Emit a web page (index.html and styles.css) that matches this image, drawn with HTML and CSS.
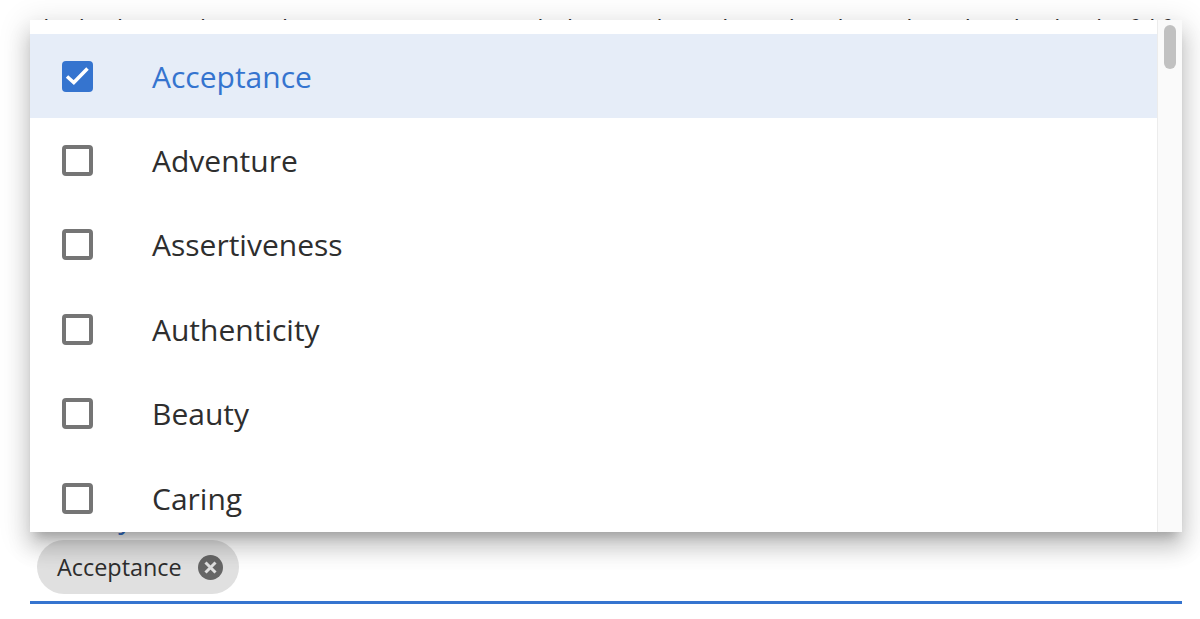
FILE: index.html
```html
<!DOCTYPE html>
<html>
<head>
    <title>Values</title>
    <meta charset="UTF-8">
    <meta name="viewport" content="width=device-width, initial-scale=1.0">
    <link rel="stylesheet" href="styles.css">
</head>
<body>
    <div class="page">
        <p class="hint">Think about what truly matters to you and choose the values that best describe the kind of life</p>
        <div class="field">
            <label class="field-label">Primary values</label>
            <div class="chips">
                <span class="chip">
                    Acceptance
                    <svg class="chip-remove" viewBox="0 0 25 25" width="25" height="25">
                        <circle cx="12.5" cy="12.5" r="12.5" fill="#666666"/>
                        <path d="M7.5 7.5 L17.5 17.5 M17.5 7.5 L7.5 17.5" stroke="#e0e0e0" stroke-width="3" fill="none"/>
                    </svg>
                </span>
            </div>
        </div>

        <div class="menu">
            <ul class="options">
                <li class="option selected">
                    <span class="checkbox">
                        <svg viewBox="0 0 31 31" width="31" height="31">
                            <path d="M5 15.5 L11.8 21.5 L25.5 7.5" stroke="#ffffff" stroke-width="3.5" fill="none"/>
                        </svg>
                    </span>
                    Acceptance
                </li>
                <li class="option"><span class="checkbox"></span>Adventure</li>
                <li class="option"><span class="checkbox"></span>Assertiveness</li>
                <li class="option"><span class="checkbox"></span>Authenticity</li>
                <li class="option"><span class="checkbox"></span>Beauty</li>
                <li class="option"><span class="checkbox"></span>Caring</li>
                <li class="option"><span class="checkbox"></span>Challenge</li>
            </ul>
            <div class="scrollbar">
                <div class="scrollbar-thumb"></div>
            </div>
        </div>
    </div>
</body>
</html>
```

FILE: styles.css
```css
html, body {
    margin: 0;
    height: 100%;
    background-color: #ffffff;
    overflow: hidden;
}
.page {
    position: relative;
    height: 619px;
    padding: 0 18px 0 30px;
    box-sizing: border-box;
    font-family: "Open Sans", sans-serif;
    color: #2e2e2e;
}
.hint {
    margin: 0;
    padding-top: 12px;
    font-size: 24px;
    line-height: 32px;
    word-spacing: 6px;
    white-space: nowrap;
    overflow: hidden;
}
.field {
    margin-top: 456px;
    border-bottom: 3px solid #3574cf;
}
.field-label {
    display: block;
    font-size: 28px;
    line-height: 34px;
    color: #3574cf;
}
.chips {
    display: flex;
    padding: 6px 7px 7px;
}
.chip {
    display: flex;
    align-items: center;
    gap: 16px;
    height: 54px;
    padding: 0 16px 0 20px;
    border-radius: 27px;
    background-color: #e0e0e0;
    font-size: 23.4px;
}
.menu {
    position: absolute;
    top: 20px;
    left: 30px;
    width: 1152px;
    height: 512px;
    display: flex;
    overflow: hidden;
    background-color: #ffffff;
    box-shadow: 0 10px 10px -6px rgba(0, 0, 0, 0.2), 0 16px 20px 2px rgba(0, 0, 0, 0.14), 0 6px 28px 4px rgba(0, 0, 0, 0.12);
}
.options {
    flex: 1;
    margin: 0;
    padding: 14px 0 0;
    list-style: none;
}
.option {
    display: flex;
    align-items: center;
    gap: 59px;
    height: 84.4px;
    padding-left: 32px;
    font-size: 30px;
}
.option.selected {
    background-color: #e6edf8;
    color: #3574cf;
}
.checkbox {
    width: 31px;
    height: 31px;
    box-sizing: border-box;
    border: 4px solid #757575;
    border-radius: 4px;
}
.selected .checkbox {
    border: none;
    background-color: #3574cf;
}
.selected .checkbox svg {
    display: block;
}
.scrollbar {
    width: 25px;
    box-sizing: border-box;
    padding: 5px 6px 0 6px;
    background-color: #fafafa;
    border-left: 1px solid #ececec;
}
.scrollbar-thumb {
    height: 44px;
    border-radius: 7px;
    background-color: #c1c1c1;
}
```
